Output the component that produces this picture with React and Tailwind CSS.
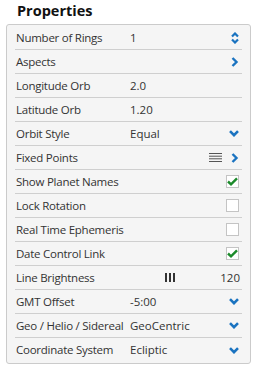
const font = { fontFamily: '"Open Sans", "Liberation Sans", sans-serif' };

function Chevron({ dir }) {
  if (dir === "right")
    return (
      <svg width="8" height="10" viewBox="0 0 8 10" className="text-[#1a73c0]">
        <path d="M1.5 1 L5.5 5 L1.5 9" fill="none" stroke="currentColor" strokeWidth="2.4" />
      </svg>
    );
  if (dir === "down")
    return (
      <svg width="10" height="7" viewBox="0 0 10 7" className="text-[#1a73c0]">
        <path d="M1 1.2 L5 5.2 L9 1.2" fill="none" stroke="currentColor" strokeWidth="2.6" />
      </svg>
    );
  return (
    <svg width="8" height="12" viewBox="0 0 8 12" className="text-[#1a73c0]">
      <path d="M1 4.5 L4 1.5 L7 4.5 M1 7.5 L4 10.5 L7 7.5" fill="none" stroke="currentColor" strokeWidth="2.2" />
    </svg>
  );
}

function Checkbox({ checked }) {
  return (
    <div className="w-[13px] h-[13px] border border-[#c4c4c4] bg-white flex items-center justify-center">
      {checked && (
        <svg width="11" height="9" viewBox="0 0 11 9">
          <path d="M1 4.5 L4 7.3 L10 1.3" fill="none" stroke="#1b8a2a" strokeWidth="2.4" />
        </svg>
      )}
    </div>
  );
}

function Lines() {
  return (
    <svg width="13" height="9" viewBox="0 0 13 9" className="mr-[9px]">
      <path d="M0 0.5 H13 M0 3.2 H13 M0 5.8 H13 M0 8.5 H13" stroke="#555" strokeWidth="1" />
    </svg>
  );
}

const rows = [
  { label: "Number of Rings", value: "1", icon: <Chevron dir="updown" /> },
  { label: "Aspects", icon: <Chevron dir="right" /> },
  { label: "Longitude Orb", value: "2.0" },
  { label: "Latitude Orb", value: "1.20" },
  { label: "Orbit Style", value: "Equal", icon: <Chevron dir="down" /> },
  { label: "Fixed Points", icon: <><Lines /><Chevron dir="right" /></> },
  { label: "Show Planet Names", icon: <Checkbox checked /> },
  { label: "Lock Rotation", icon: <Checkbox /> },
  { label: "Real Time Ephemeris", icon: <Checkbox /> },
  { label: "Date Control Link", icon: <Checkbox checked /> },
  { label: "Line Brightness", brightness: true },
  { label: "GMT Offset", value: "-5:00", icon: <Chevron dir="down" /> },
  { label: "Geo / Helio / Sidereal", value: "GeoCentric", icon: <Chevron dir="down" /> },
  { label: "Coordinate System", value: "Ecliptic", icon: <Chevron dir="down" /> },
];

export default function App() {
  return (
    <div className="w-[256px] h-[371px] bg-white text-[#333]" style={font}>
      <h1 className="pl-[17px] pt-[1px] h-[24px] text-[14.5px] leading-[19px] font-bold text-[#111]">
        Properties
      </h1>
      <div className="ml-[6px] w-[245px] border border-[#cbcbcb] rounded-[3px] bg-[#f5f5f5] py-[1px]">
        {rows.map((r, i) => (
          <div
            key={r.label}
            className={`mx-[8px] h-[24px] flex items-center text-[11.5px] ${
              i < rows.length - 1 ? "border-b border-[#cfcfcf]" : ""
            }`}
          >
            <span className="pl-[1px] w-[115px] shrink-0 whitespace-nowrap tracking-[-0.25px]">{r.label}</span>
            {r.brightness ? (
              <div className="flex-1 flex items-center">
                <span className="ml-[35px] flex gap-[2px]">
                  <span className="w-[2px] h-[9px] bg-[#333]" />
                  <span className="w-[2px] h-[9px] bg-[#333]" />
                  <span className="w-[2px] h-[9px] bg-[#333]" />
                </span>
                <span className="ml-auto pr-[2px]">120</span>
              </div>
            ) : (
              <>
                <span className="flex-1">{r.value}</span>
                <span className="flex items-center pr-[3px]">{r.icon}</span>
              </>
            )}
          </div>
        ))}
      </div>
    </div>
  );
}
